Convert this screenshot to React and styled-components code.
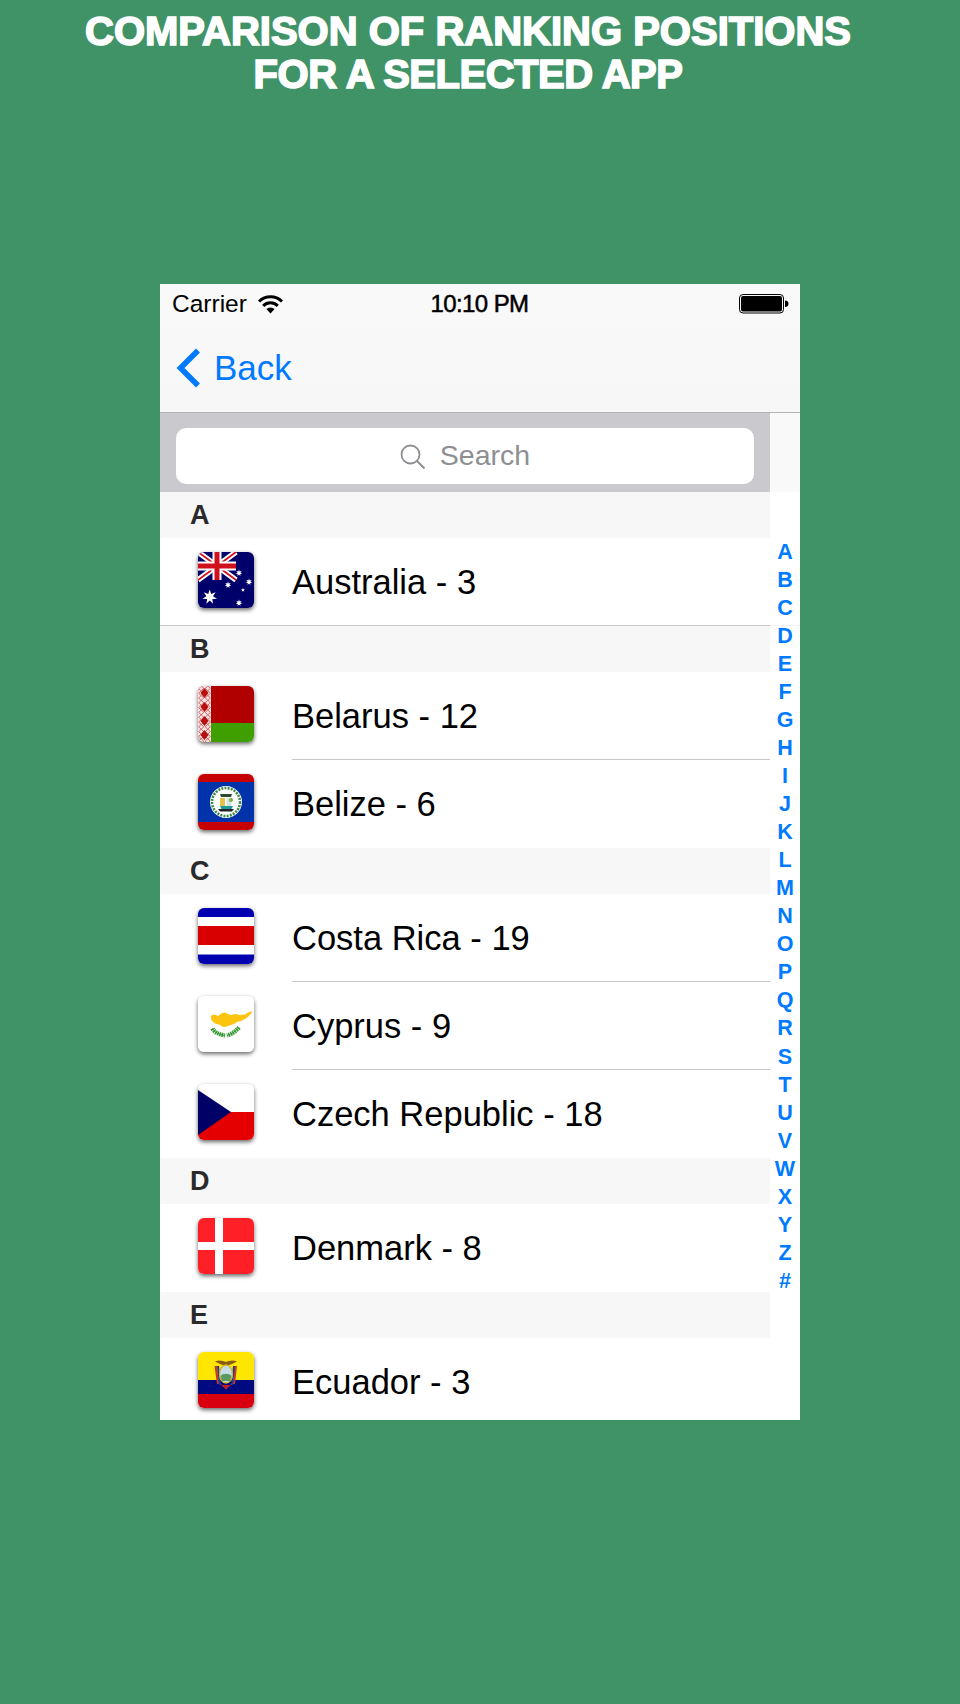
import React from "react";
import styled, { createGlobalStyle } from "styled-components";

/** Global */
const GlobalStyle = createGlobalStyle`
  html, body {
    margin: 0;
    padding: 0;
    background: #409367;
  }
`;

/** Page */
const Page = styled.div`
  width: 960px;
  height: 1704px;
  display: flex;
  flex-direction: column;
  align-items: center;
  background: #409367;
  font-family: "Liberation Sans", Arial, sans-serif;
  overflow: hidden;
`;
const Title = styled.h1`
  width: 936px;
  height: 284px;
  margin: 0 24px 0 0;
  padding-top: 10px;
  box-sizing: border-box;
  color: #fff;
  font-size: 40px;
  line-height: 43px;
  font-weight: 700;
  text-align: center;
  white-space: nowrap;
  -webkit-text-stroke: 1.6px #fff;
`;
const TitleSecondLine = styled.span`
  letter-spacing: -0.5px;
`;

/** Phone */
const Phone = styled.div`
  width: 640px;
  height: 1136px;
  display: flex;
  flex-direction: column;
  background: #fff;
  overflow: hidden;
`;
const TopBar = styled.div`
  flex: none;
  background: linear-gradient(#f9f9f9, #f7f7f7);
  border-bottom: 1px solid #b2b2b2;
`;
const StatusBar = styled.div`
  height: 40px;
  display: grid;
  grid-template-columns: 1fr auto 1fr;
  align-items: center;
  padding: 0 11px 0 12px;
  font-size: 24.5px;
  color: #000;
`;
const Carrier = styled.div`
  display: flex;
  align-items: center;
  gap: 11px;
`;
const Clock = styled.div`
  margin-left: -2px;
  font-size: 24px;
  letter-spacing: -0.6px;
  -webkit-text-stroke: 0.5px #000;
`;
const Battery = styled.div`
  justify-self: end;
  display: flex;
`;
const NavBar = styled.div`
  height: 88px;
  display: flex;
  align-items: center;
  gap: 13px;
  padding: 0 0 1px 16px;
  box-sizing: border-box;
  color: #007aff;
  font-size: 35px;
`;
const Body = styled.div`
  flex: 1;
  min-height: 0;
  display: flex;
`;
const List = styled.div`
  width: 610px;
  flex: none;
`;
const SearchBar = styled.div`
  height: 79px;
  padding: 15px 16px 8px;
  box-sizing: border-box;
  background: #c9c9ce;
`;
const SearchField = styled.div`
  height: 56px;
  display: flex;
  align-items: center;
  justify-content: center;
  gap: 15px;
  background: #fff;
  border-radius: 10px;
  color: #8e8e93;
  font-size: 28.5px;
`;
const SearchLabel = styled.span`
  padding-bottom: 1px;
`;
const SectionHeader = styled.div`
  height: 46px;
  padding-left: 30px;
  display: flex;
  align-items: center;
  background: #f7f7f7;
  color: #2a2a2a;
  font-size: 27px;
  font-weight: 700;
`;
const RowWrap = styled.div`
  position: relative;
  height: 88px;
  display: flex;
  flex-direction: column;
`;
const Row = styled.div`
  height: 87px;
  display: flex;
  align-items: center;
  padding-left: 38px;
`;
const Divider = styled.div`
  position: relative;
  height: 1px;
  flex: none;
  margin-left: ${({ $full }) => ($full ? "0" : "132px")};
  background: ${({ $hidden }) => ($hidden ? "transparent" : "#c8c7cc")};
  &::after {
    content: "";
    display: ${({ $full }) => ($full ? "block" : "none")};
    position: absolute;
    top: 0;
    left: 100%;
    width: 30px;
    height: 1px;
    background: #f1f1f1;
  }
`;
const RowLabel = styled.div`
  margin-left: 38px;
  color: #000;
  font-size: 34.5px;
  padding-top: 1px;
`;
const IndexColumn = styled.div`
  flex: 1;
  display: flex;
  flex-direction: column;
`;
const IndexCap = styled.div`
  height: 79px;
  flex: none;
  background: #f9f9f9;
`;
const IndexLetters = styled.div`
  position: relative;
  padding-top: 45.7px;
`;
const IndexLetter = styled.div`
  height: 28.05px;
  line-height: 28.05px;
  text-align: center;
  color: #007aff;
  font-size: 21.5px;
  font-weight: 700;
`;
const FlagBox = styled.div`
  width: 56px;
  height: 56px;
  flex: none;
  align-self: flex-start;
  margin-top: 14px;
  border-radius: 6px;
  overflow: hidden;
  background: #fff;
  box-shadow: 0 2px 4px rgba(0, 0, 0, 0.6);
  svg {
    display: block;
  }
`;

/** Drawings */
const starPoints = (cx, cy, r, n = 5, inner = 0.42) => {
  const pts = [];
  for (let i = 0; i < n * 2; i++) {
    const rad = i % 2 ? r * inner : r;
    const a = (Math.PI * i) / n - Math.PI / 2;
    pts.push(`${(cx + rad * Math.cos(a)).toFixed(2)},${(cy + rad * Math.sin(a)).toFixed(2)}`);
  }
  return pts.join(" ");
};

const WifiIcon = () => (
  <svg width="25" height="19" viewBox="0 0 25 19">
    <path d="M1 6.5 A16.5 16.5 0 0 1 24 6.5" fill="none" stroke="#000" strokeWidth="3" />
    <path d="M5.2 10.8 A10.5 10.5 0 0 1 19.8 10.8" fill="none" stroke="#000" strokeWidth="3" />
    <path d="M8.4 14 L12.5 18.4 L16.6 14 A6 6 0 0 0 8.4 14 Z" fill="#000" />
  </svg>
);
const BatteryIcon = () => (
  <svg width="50" height="20" viewBox="0 0 50 20">
    <rect x="0.5" y="0.5" width="44" height="18.5" rx="3.5" fill="none" stroke="#000" strokeWidth="1" />
    <rect x="2" y="2" width="41" height="15.5" rx="2" fill="#000" />
    <path d="M46 6.5 C48.5 6.5 49.5 8 49.5 9.75 C49.5 11.5 48.5 13 46 13 Z" fill="#000" />
  </svg>
);
const Chevron = () => (
  <svg width="25" height="40" viewBox="0 0 25 40">
    <path d="M22 2.5 L4.5 20 L22 37.5" fill="none" stroke="#007aff" strokeWidth="5.6" />
  </svg>
);
const SearchIcon = () => (
  <svg width="25" height="25" viewBox="0 0 25 25">
    <circle cx="10.5" cy="10.5" r="9" fill="none" stroke="#8e8e93" strokeWidth="1.8" />
    <path d="M17 17 L24.5 24.5" stroke="#8e8e93" strokeWidth="2" />
  </svg>
);

const Flag56 = ({ children }) => (
  <FlagBox>
    <svg width="56" height="56" viewBox="0 0 56 56">
      {children}
    </svg>
  </FlagBox>
);

const Australia = () => (
  <Flag56>
    <rect width="56" height="56" fill="#00006a" />
    <path d="M0 0 L38 28 M38 0 L0 28" stroke="#fff" strokeWidth="5.5" />
    <path d="M0 0 L38 28 M38 0 L0 28" stroke="#d0101c" strokeWidth="1.8" />
    <path d="M19 0 V28 M0 14 H38" stroke="#fff" strokeWidth="9" />
    <path d="M19 0 V28 M0 14 H38" stroke="#d0101c" strokeWidth="5" />
    <polygon points={starPoints(11.7, 45, 7.5, 7, 0.45)} fill="#fff" />
    <polygon points={starPoints(41, 21, 3.4, 7, 0.45)} fill="#fff" />
    <polygon points={starPoints(51, 30, 3.4, 7, 0.45)} fill="#fff" />
    <polygon points={starPoints(30, 33, 3.4, 7, 0.45)} fill="#fff" />
    <polygon points={starPoints(45, 38, 2, 5, 0.45)} fill="#fff" />
    <polygon points={starPoints(41, 51, 3.4, 7, 0.45)} fill="#fff" />
  </Flag56>
);

const BELARUS_ROWS = Array.from({ length: 12 }, (_, i) => i);
const Belarus = () => (
  <Flag56>
    <rect width="56" height="37" fill="#b00000" />
    <rect y="37" width="56" height="19" fill="#3f9f00" />
    <rect width="13" height="56" fill="#f6e4e4" />
    {BELARUS_ROWS.map((i) => (
      <g key={i} fill="none" stroke="#d65a5a" strokeWidth="0.9">
        <path d={`M3.2 ${i * 4.8} l2.6 2.4 l-2.6 2.4 l-2.6 -2.4 Z`} />
        <path d={`M9.8 ${i * 4.8} l2.6 2.4 l-2.6 2.4 l-2.6 -2.4 Z`} />
      </g>
    ))}
    {[7, 21, 35, 49].map((y) => (
      <path key={y} d={`M6.5 ${y - 5} L10.5 ${y} L6.5 ${y + 5} L2.5 ${y} Z`} fill="#b80f0f" />
    ))}
  </Flag56>
);

const Belize = () => (
  <Flag56>
    <rect width="56" height="56" fill="#c60000" />
    <rect y="8" width="56" height="40" fill="#0033aa" />
    <circle cx="28" cy="28" r="16" fill="#fff" />
    <circle cx="28" cy="28" r="14" fill="none" stroke="#3d8a46" strokeWidth="2.6" strokeDasharray="2 1.2" />
    <path d="M22 20 H34 L33 23 H23 Z" fill="#2d4a2a" />
    <rect x="22" y="24" width="5" height="8" fill="#e5c34a" />
    <rect x="28.5" y="24" width="5" height="8" fill="#d6dfe6" />
    <path d="M22 32 H35 L33 36 H24 Z" fill="#1c9a98" />
    <path d="M20 35 H36 L34 37.5 H22 Z" fill="#222" />
    <circle cx="33" cy="26" r="2" fill="#7fb23c" />
  </Flag56>
);

const CostaRica = () => (
  <Flag56>
    <rect width="56" height="9" fill="#0000b0" />
    <rect y="9" width="56" height="9" fill="#fff" />
    <rect y="18" width="56" height="19" fill="#d80000" />
    <rect y="37" width="56" height="10" fill="#fff" />
    <rect y="46.5" width="56" height="9.5" fill="#0000b0" />
  </Flag56>
);

const Cyprus = () => (
  <Flag56>
    <rect width="56" height="56" fill="#fff" />
    <path
      d="M13 19.5 L17 18.5 L20 20 L24 17 L27 16.5 L30 18 L33 19 L37 18 L42 19 L47 18.5 L51 16 L54.5 15 L52.5 18.5 L48 22.5 L43 25 L39 26 L36 28 L33 29 L30 30 L27 31 L24 30.5 L21 28.5 L17 27.5 L14.5 25.5 L13 23 Z"
      fill="#fdc40f"
    />
    <path d="M14.5 32.5 C16 36 21 38.5 27 39.5 M41 31.5 C38 35 34 38 29 39.5" fill="none" stroke="#3f9e3a" strokeWidth="4.4" strokeDasharray="1.6 0.7" />
    <path d="M14.5 32.5 C16 36 21 38.5 27 39.5 M41 31.5 C38 35 34 38 29 39.5" fill="none" stroke="#2f8a30" strokeWidth="1" />
  </Flag56>
);

const Czech = () => (
  <Flag56>
    <rect width="56" height="28" fill="#fff" />
    <rect y="28" width="56" height="28" fill="#e40000" />
    <polygon points="0,6 33,28 0,51" fill="#000066" />
  </Flag56>
);

const Denmark = () => (
  <Flag56>
    <rect width="56" height="56" fill="#ff1f26" />
    <rect x="17" width="8" height="56" fill="#fff" />
    <rect y="24" width="56" height="8" fill="#fff" />
  </Flag56>
);

const Ecuador = () => (
  <Flag56>
    <rect width="56" height="28" fill="#ffe600" />
    <rect y="28" width="56" height="14" fill="#000a80" />
    <rect y="42" width="56" height="14" fill="#d8000f" />
    <path d="M17 9.5 C21 7.5 25 8.5 28 10 C31 8.5 35 7.5 39 9.5 L34 12 L31 13 H25 L22 12 Z" fill="#8a5a10" />
    <path d="M16.5 14 H19 L21 32 H19 Z M39 14 H36.5 L35 32 H37 Z" fill="#c8382a" />
    <path d="M19 14 H21 L23 33 H21 Z M37 14 H35 L33 33 H35 Z" fill="#1a3a9a" />
    <ellipse cx="28" cy="22" rx="6.5" ry="9" fill="#c5dce2" stroke="#d8b030" strokeWidth="1.4" />
    <path d="M22.5 24 C25 21 31 21 33.5 24 L32 29 H24 Z" fill="#5a9a60" />
    <path d="M22 32 L28 37.5 L34 32 L31 33 H25 Z" fill="#c42020" />
  </Flag56>
);

/** Data */
const SECTIONS = [
  { letter: "A", rows: [{ name: "Australia - 3", flag: Australia }] },
  {
    letter: "B",
    rows: [
      { name: "Belarus - 12", flag: Belarus },
      { name: "Belize - 6", flag: Belize },
    ],
  },
  {
    letter: "C",
    rows: [
      { name: "Costa Rica - 19", flag: CostaRica },
      { name: "Cyprus - 9", flag: Cyprus },
      { name: "Czech Republic - 18", flag: Czech },
    ],
  },
  { letter: "D", rows: [{ name: "Denmark - 8", flag: Denmark }] },
  { letter: "E", rows: [{ name: "Ecuador - 3", flag: Ecuador }] },
];
const INDEX = "ABCDEFGHIJKLMNOPQRSTUVWXYZ#".split("");

export default function App() {
  return (
    <Page>
      <GlobalStyle />
      <Title>
        COMPARISON OF RANKING POSITIONS
        <br />
        <TitleSecondLine>FOR A SELECTED APP</TitleSecondLine>
      </Title>
      <Phone>
        <TopBar>
          <StatusBar>
            <Carrier>
              Carrier
              <WifiIcon />
            </Carrier>
            <Clock>10:10 PM</Clock>
            <Battery>
              <BatteryIcon />
            </Battery>
          </StatusBar>
          <NavBar>
            <Chevron />
            Back
          </NavBar>
        </TopBar>
        <Body>
          <List>
            <SearchBar>
              <SearchField>
                <SearchIcon />
                <SearchLabel>Search</SearchLabel>
              </SearchField>
            </SearchBar>
            {SECTIONS.map((section) => (
              <div key={section.letter}>
                <SectionHeader>{section.letter}</SectionHeader>
                {section.rows.map((row, i) => {
                  const FlagIcon = row.flag;
                  const isFull = section.letter === "A";
                  const isLast = i === section.rows.length - 1;
                  return (
                    <RowWrap key={row.name}>
                      <Row>
                        <FlagIcon />
                        <RowLabel>{row.name}</RowLabel>
                      </Row>
                      <Divider $full={isFull} $hidden={isLast && !isFull} />
                    </RowWrap>
                  );
                })}
              </div>
            ))}
          </List>
          <IndexColumn>
            <IndexCap />
            <IndexLetters>
              {INDEX.map((l) => (
                <IndexLetter key={l}>{l}</IndexLetter>
              ))}
            </IndexLetters>
          </IndexColumn>
        </Body>
      </Phone>
    </Page>
  );
}
